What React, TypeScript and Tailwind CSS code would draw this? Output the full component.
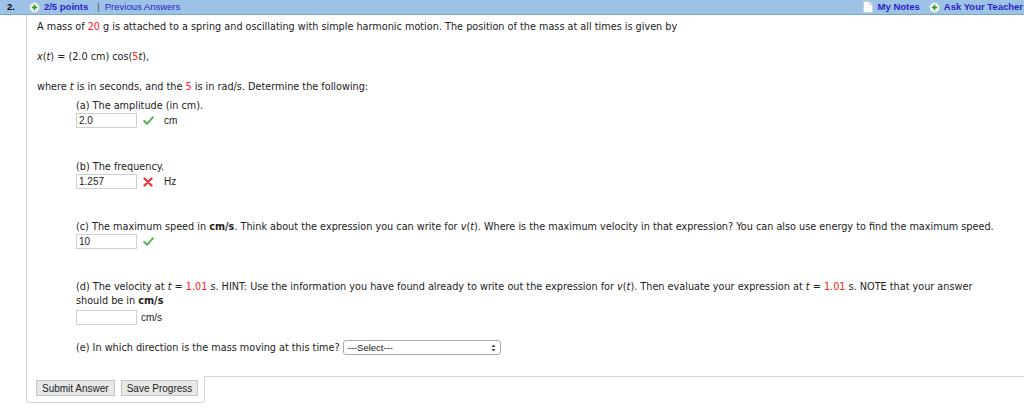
import React from 'react'

const verdana = { fontFamily: '"DejaVu Sans", Verdana, sans-serif' }

function PlusIcon() {
    return (
        <svg width="11" height="11" viewBox="0 0 11 11" className="inline-block">
            <circle cx="5.5" cy="5.5" r="5" fill="#f4f4f4" stroke="#b8c4cc" strokeWidth="0.8" />
            <path d="M5.5 2.8v5.4M2.8 5.5h5.4" stroke="#1f9a1f" strokeWidth="1.6" />
        </svg>
    )
}

function NoteIcon() {
    return (
        <svg width="10" height="12" viewBox="0 0 10 12" className="inline-block">
            <path d="M0.5 0.5h6l3 3v8h-9z" fill="#fff" stroke="#c8ccd0" strokeWidth="0.8" />
            <path d="M6.5 0.5v3h3" fill="#eee" stroke="#c8ccd0" strokeWidth="0.8" />
        </svg>
    )
}

function Check() {
    return (
        <svg width="11" height="9" viewBox="0 0 11 9">
            <path d="M1.2 5l2.8 2.8L10 1.2" fill="none" stroke="#55b255" strokeWidth="2" strokeLinecap="round" strokeLinejoin="round" />
        </svg>
    )
}

function Cross() {
    return (
        <svg width="10" height="10" viewBox="0 0 10 10">
            <path d="M1.5 1.5l7 7M8.5 1.5l-7 7" stroke="#f03a3a" strokeWidth="2.4" strokeLinecap="round" />
        </svg>
    )
}

function Answer({ value, mark, unit }: { value: string; mark?: 'ok' | 'bad'; unit?: string }) {
    return (
        <div className="flex items-center h-[15px]">
            <div className="w-[61px] h-[15px] border border-[#cfcfcf] bg-white px-[2px] text-[10px] leading-[13px] text-[#222] font-['Liberation_Sans',Arial,sans-serif]">
                {value}
            </div>
            <div className="w-[22px] flex justify-center">
                {mark === 'ok' && <Check />}
                {mark === 'bad' && <Cross />}
            </div>
            {unit && <span className="ml-[5px] text-[10px] font-['Liberation_Sans',Arial,sans-serif] text-[#222]">{unit}</span>}
        </div>
    )
}

const red = 'text-[#ff2020]'

export default function App() {
    return (
        <div className="w-[1024px] h-[409px] bg-white text-[#222] overflow-hidden" style={verdana}>
            <div className="h-[15px] bg-[#9cc3e5] border-b border-[#7ea6c8] flex items-center text-[9.5px] font-['Liberation_Sans',Arial,sans-serif]">
                <span className="ml-[7px] font-bold text-black">2.</span>
                <span className="ml-[14px] flex items-center"><PlusIcon /></span>
                <span className="ml-[4px] font-bold text-[#2a22c8]">2/5 points</span>
                <span className="ml-[9px] text-[#555]">|</span>
                <span className="ml-[5px] text-[#2a22c8]">Previous Answers</span>
                <div className="ml-auto flex items-center">
                    <NoteIcon />
                    <span className="ml-[5px] font-bold text-[#2a22c8]">My Notes</span>
                    <span className="ml-[9px] flex items-center"><PlusIcon /></span>
                    <span className="ml-[4px] mr-[1px] font-bold text-[#2a22c8]">Ask Your Teacher</span>
                </div>
            </div>

            <div className="ml-[26px]">
                <div className="border-l border-b border-[#d4d4d4] pl-[10px] pt-[5px] h-[362px] text-[9.7px] leading-[14px]">
                    <p>
                        A mass of <span className={red}>20</span> g is attached to a spring and oscillating with simple harmonic motion. The position of the mass at all times is given by
                    </p>
                    <p className="mt-[16px]">
                        <i>x</i>(<i>t</i>) = (2.0 cm) cos(<span className={red}>5</span><i>t</i>),
                    </p>
                    <p className="mt-[16px]">
                        where <i>t</i> is in seconds, and the <span className={red}>5</span> is in rad/s. Determine the following:
                    </p>

                    <div className="ml-[39px]">
                        <p className="mt-[5px]">(a) The amplitude (in cm).</p>
                        <Answer value="2.0" mark="ok" unit="cm" />

                        <p className="mt-[32px]">(b) The frequency.</p>
                        <Answer value="1.257" mark="bad" unit="Hz" />

                        <p className="mt-[31px]">
                            (c) The maximum speed in <b>cm/s</b>. Think about the expression you can write for <i>v</i>(<i>t</i>). Where is the maximum velocity in that expression? You can also use energy to find the maximum speed.
                        </p>
                        <Answer value="10" mark="ok" />

                        <p className="mt-[31px] pr-[20px]">
                            (d) The velocity at <i>t</i> = <span className={red}>1.01</span> s. HINT: Use the information you have found already to write out the expression for <i>v</i>(<i>t</i>). Then evaluate your expression at <i>t</i> = <span className={red}>1.01</span> s. NOTE that your answer should be in <b>cm/s</b>
                        </p>
                        <div className="mt-[2px] flex items-center h-[15px]">
                            <div className="w-[61px] h-[15px] border border-[#cfcfcf] bg-white" />
                            <span className="ml-[4px] text-[10px] font-['Liberation_Sans',Arial,sans-serif]">cm/s</span>
                        </div>

                        <div className="mt-[15px] flex items-center">
                            <span>(e) In which direction is the mass moving at this time?</span>
                            <div className="ml-[3px] w-[158px] h-[15px] border border-[#aaa] rounded-[3px] bg-white flex items-center justify-between px-[4px] text-[9.5px] font-['Liberation_Sans',Arial,sans-serif]">
                                <span>---Select---</span>
                                <svg width="5" height="8" viewBox="0 0 5 8">
                                    <path d="M0.5 3L2.5 0.5L4.5 3zM0.5 5L2.5 7.5L4.5 5z" fill="#444" />
                                </svg>
                            </div>
                        </div>
                    </div>
                </div>
                <div className="-mt-px w-[179px] bg-white border-l border-r border-b border-[#d4d4d4] rounded-b-[3px] pl-[9px] pt-[4px] pb-[6px] flex gap-[6px] font-['Liberation_Sans',Arial,sans-serif] text-[10px]">
                    <div className="h-[16px] px-[5px] flex items-center bg-[#e8e8e8] border border-[#c4c4c4] text-[#222]">Submit Answer</div>
                    <div className="h-[16px] px-[5px] flex items-center bg-[#e8e8e8] border border-[#c4c4c4] text-[#222]">Save Progress</div>
                </div>
            </div>
        </div>
    )
}
